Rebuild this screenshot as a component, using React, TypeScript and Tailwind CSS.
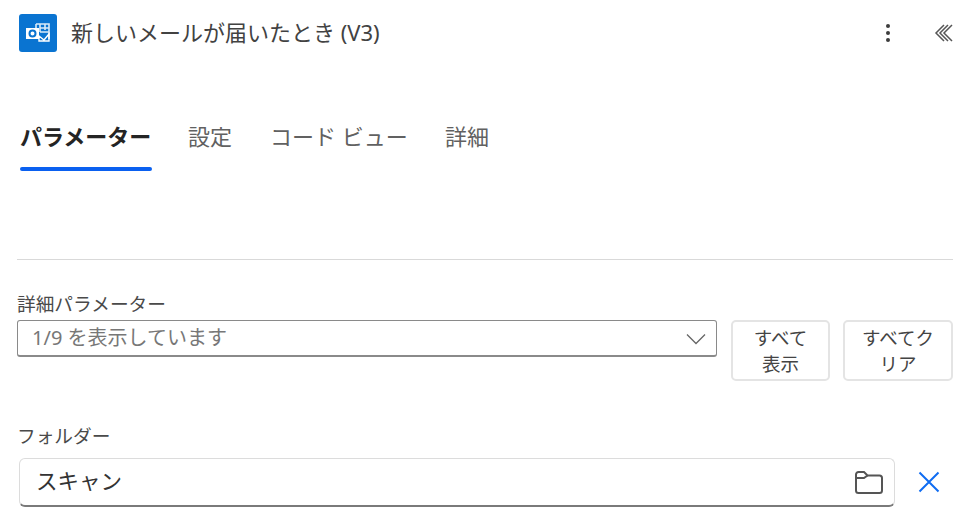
const FONT = "font-['Noto_Sans','Noto_Sans_CJK_JP',sans-serif]";

const TABS = [
  { label: "設定", width: "w-[43px]" },
  { label: "コード ビュー", width: "w-[136px]" },
  { label: "詳細", width: "w-[43px]" },
];

function OutlookIcon() {
  return (
    <div className="w-[38px] h-[38px] rounded-[3px] bg-[#0a74d1] flex items-center justify-center shrink-0">
      <svg width="26" height="20" viewBox="0 0 26 20" fill="none">
        <rect x="1" y="5" width="13" height="11" fill="#fff" />
        <circle cx="7.5" cy="10.5" r="3" fill="none" stroke="#0a74d1" strokeWidth="2" />
        <path d="M11 1h13v15M11 5V1M15 1v8M20 1v6M15 5h9M15 9h9" stroke="#fff" strokeWidth="1.6" opacity="0.85" />
        <path d="M14 13l5 4 5-6v7H14z" fill="none" stroke="#fff" strokeWidth="1.4" />
      </svg>
    </div>
  );
}

export default function App() {
  return (
    <div className={`${FONT} w-[955px] h-[524px] bg-white overflow-hidden text-[#424242] pl-[17px] pr-[2px]`}>
      <div className="flex items-center h-[38px] mt-[14px] pl-[2px]">
        <OutlookIcon />
        <div className="ml-[14px] text-[22px] leading-[36px] h-[38px]">新しいメールが届いたとき (V3)</div>
        <svg width="6" height="20" viewBox="0 0 6 20" fill="#3d3d3d" className="ml-auto mr-[43px]">
          <circle cx="3" cy="3" r="2" />
          <circle cx="3" cy="10" r="2" />
          <circle cx="3" cy="17" r="2" />
        </svg>
        <svg width="20" height="20" viewBox="0 0 20 20" fill="none" stroke="#555" strokeWidth="1.5" className="mr-[-1px]">
          <path d="M10 2L2 10l8 8" />
          <path d="M18 2l-8 8 8 8" />
          <path d="M14 2l-8 8 8 8" />
        </svg>
      </div>

      <div className="flex mt-[65px] h-[53px] pl-[3px] text-[22px] leading-[39px]">
        <div className="w-[132px] mr-[36px] relative font-bold text-[#242424] whitespace-nowrap">
          パラメーター
          <div className="absolute left-0 right-0 top-[50px] h-[4px] rounded-full bg-[#0a60f0]" />
        </div>
        {TABS.map((tab) => (
          <div key={tab.label} className={`${tab.width} mr-[39px] text-[#616161] whitespace-nowrap`}>
            {tab.label}
          </div>
        ))}
      </div>

      <div className="mt-[89px] h-px w-[936px] bg-[#d9d9d9]" />

      <div className="mt-[33px] text-[18.7px] leading-[21px] text-[#4a4a4a]">詳細パラメーター</div>
      <div className="flex mt-[6px] items-start">
        <div className="w-[700px] h-[37px] rounded-[3px] border border-[#8a8a8a] border-b-[2px] flex items-center pl-[14px] pr-[10px] text-[20px] text-[#777]">
          1/9 を表示しています
          <svg width="20" height="12" viewBox="0 0 20 12" fill="none" stroke="#666" strokeWidth="1.3" className="ml-auto mt-[2px]">
            <path d="M1 1.500l9 9 9-9" />
          </svg>
        </div>
        <button className="ml-[14px] w-[99px] h-[61px] rounded-[5px] border-2 border-[#e4e4e4] text-[18.500px] leading-[26px] text-[#444]">
          すべて
          <br />
          表示
        </button>
        <button className="ml-[13px] w-[110px] h-[61px] rounded-[5px] border-2 border-[#e4e4e4] text-[18.500px] leading-[26px] text-[#444]">
          すべてク
          <br />
          リア
        </button>
      </div>

      <div className="mt-[44px] text-[18.7px] leading-[21px] text-[#4a4a4a]">フォルダー</div>
      <div className="flex items-center mt-[12px] pl-[2px]">
        <div className="w-[876px] h-[49px] rounded-[6px] border border-[#dcdcdc] border-b-[2px] border-b-[#7a7a7a] flex items-center pl-[16px] pr-[11px] pb-[2px] text-[21.500px] text-[#333]">
          スキャン
          <svg width="28" height="24" viewBox="0 0 28 24" fill="none" stroke="#555" strokeWidth="2" className="ml-auto mt-[2px]">
            <path d="M1 4.500A2.500 2.500 0 0 1 3.500 2H9l3.500 3.500H24.500A2.500 2.500 0 0 1 27 8v12.500a2.500 2.500 0 0 1-2.500 2.500H3.500A2.500 2.500 0 0 1 1 20.500z" />
            <path d="M1 8H9l3.500-2.500" />
          </svg>
        </div>
        <svg width="22" height="22" viewBox="0 0 22 22" fill="none" stroke="#0f6cf2" strokeWidth="2" className="ml-[23px] mb-[2px]">
          <path d="M1.500 1.500l19 19M20.500 1.500l-19 19" />
        </svg>
      </div>
    </div>
  );
}
